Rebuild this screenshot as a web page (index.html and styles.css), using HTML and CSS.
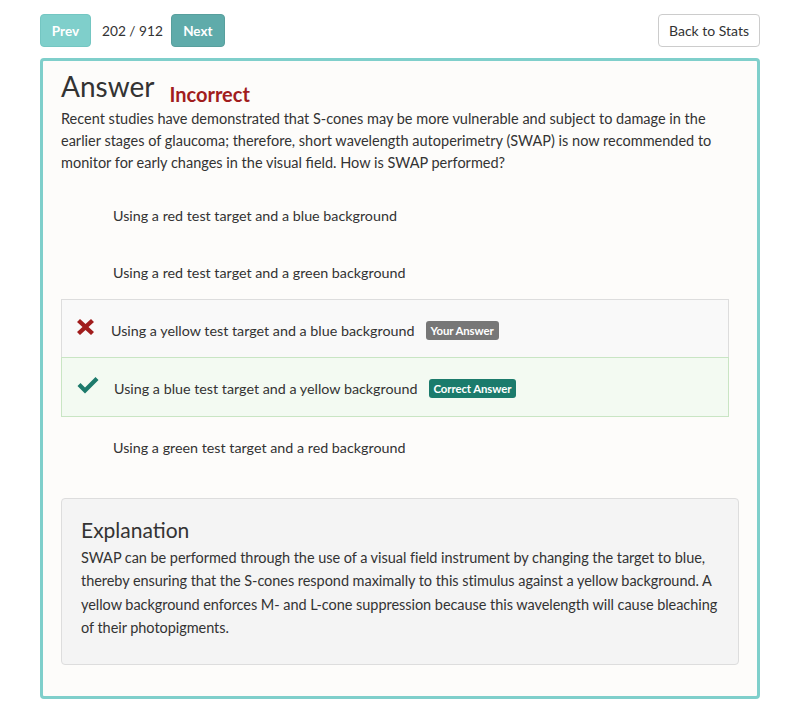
FILE: index.html
```html
<!DOCTYPE html>
<html>
<head>
<meta charset="utf-8">
<link rel="stylesheet" href="styles.css">
</head>
<body>
<div class="page">
  <div class="toolbar">
    <div class="pager">
      <button class="btn btn-prev">Prev</button>
      <span class="count">202 / 912</span>
      <button class="btn btn-next">Next</button>
    </div>
    <button class="btn btn-back">Back to Stats</button>
  </div>
  <div class="card">
    <div class="title-row">
      <h1 class="title">Answer</h1>
      <span class="verdict">Incorrect</span>
    </div>
    <p class="question">Recent studies have demonstrated that S-cones may be more vulnerable and subject to damage in the earlier stages of glaucoma; therefore, short wavelength autoperimetry (SWAP) is now recommended to monitor for early changes in the visual field. How is SWAP performed?</p>
    <ul class="options">
      <li class="option"><span class="icon"></span><span class="opt-text">Using a red test target and a blue background</span></li>
      <li class="option"><span class="icon"></span><span class="opt-text">Using a red test target and a green background</span></li>
      <li class="option wrong">
        <span class="icon">
          <svg width="17" height="16" viewBox="0 0 17 16"><path d="M0 3 L3 0 L8.5 5 L14 0 L17 3 L11.5 8 L17 13 L14 16 L8.5 11 L3 16 L0 13 L5.5 8 Z" fill="#a11d1d"/></svg>
        </span>
        <span class="opt-text">Using a yellow test target and a blue background</span>
        <span class="badge badge-your">Your Answer</span>
      </li>
      <li class="option right">
        <span class="icon">
          <svg width="22" height="17" viewBox="0 0 22 17"><path d="M0.5 9 L3.5 6 L8 10.5 L18.5 0 L21.5 3 L8 16.5 Z" fill="#1d7a6c"/></svg>
        </span>
        <span class="opt-text">Using a blue test target and a yellow background</span>
        <span class="badge badge-correct">Correct Answer</span>
      </li>
      <li class="option"><span class="icon"></span><span class="opt-text">Using a green test target and a red background</span></li>
    </ul>
    <div class="explanation">
      <h2 class="exp-title">Explanation</h2>
      <p class="exp-text">SWAP can be performed through the use of a visual field instrument by changing the target to blue, thereby ensuring that the S-cones respond maximally to this stimulus against a yellow background. A yellow background enforces M- and L-cone suppression because this wavelength will cause bleaching of their photopigments.</p>
    </div>
  </div>
</div>
</body>
</html>
```

FILE: styles.css
```css
* { box-sizing: border-box; }
html, body { margin: 0; padding: 0; background: #ffffff; }
body {
  font-family: Lato, "Open Sans", sans-serif;
  color: #333333;
  font-size: 14.5px;
}
.page {
  padding: 14px 40px 0 40px;
}
.toolbar {
  display: flex;
  justify-content: space-between;
  align-items: center;
  height: 33px;
  margin-bottom: 11px;
}
.pager {
  display: flex;
  align-items: center;
}
.btn {
  font-family: Lato, sans-serif;
  height: 33px;
  border-radius: 4px;
  font-size: 13.5px;
  padding: 0;
  border: 1px solid transparent;
  cursor: pointer;
}
.btn-prev {
  width: 51px;
  background: #7fcfcb;
  border-color: #74c6c2;
  color: #ffffff;
  font-weight: 700;
}
.btn-next {
  width: 54px;
  background: #5fabaa;
  border-color: #589f9d;
  color: #ffffff;
  font-weight: 700;
}
.count {
  font-size: 13.7px;
  margin: 0 8px 0 11px;
  color: #333;
}
.btn-back {
  width: 102px;
  background: #ffffff;
  border-color: #cccccc;
  color: #333;
  font-size: 14px;
}
.card {
  border: 3px solid #7fcfcb;
  border-radius: 4px;
  background: #fdfcfa;
  padding: 7px 18px 30px 18px;
  height: 641px;
}
.title-row {
  display: flex;
  align-items: baseline;
}
.title {
  margin: 0;
  font-size: 28px;
  font-weight: 400;
  line-height: 36px;
  color: #333;
}
.verdict {
  margin-left: 15px;
  font-size: 20px;
  font-weight: 700;
  color: #a11d1d;
  position: relative;
  top: 5px;
}
.question {
  margin: 4px 0 0 0;
  line-height: 22px;
}
.options {
  list-style: none;
  margin: 11px 10px 0 0;
  padding: 0;
}
.option {
  display: flex;
  align-items: center;
  height: 57px;
  padding-left: 15px;
  padding-top: 3px;
  border: 1px solid transparent;
}
.option .icon {
  width: 36px;
  display: flex;
  align-items: center;
}
.option .opt-text {
  font-size: 14.3px;
}
.option.wrong {
  background: #f9f9f9;
  border-color: #dddddd;
  border-bottom: 0;
  height: 58px;
}
.option.wrong .icon { width: 34px; position: relative; top: -3px; }
.option.right {
  background: #f3faf2;
  border-color: #c9e5c4;
  height: 60px;
}
.option.right .icon { width: 37px; position: relative; top: -3px; }
.badge {
  margin-left: 11px;
  font-size: 11.4px;
  font-weight: 700;
  color: #ffffff;
  border-radius: 3px;
  padding: 0 5px;
  line-height: 19px;
  letter-spacing: -0.1px;
}
.badge-your { background: #777777; }
.badge-correct { background: #1b7b6c; }
.explanation {
  margin-top: 24px;
  background: #f4f4f4;
  border: 1px solid #dddddd;
  border-radius: 4px;
  padding: 16px 19px 20px 19px;
  height: 167px;
}
.exp-title {
  margin: 0 0 1px 0;
  font-size: 21px;
  font-weight: 400;
  line-height: 30px;
  color: #333;
}
.exp-text {
  margin: 0;
  line-height: 23.4px;
  letter-spacing: -0.05px;
}
```
